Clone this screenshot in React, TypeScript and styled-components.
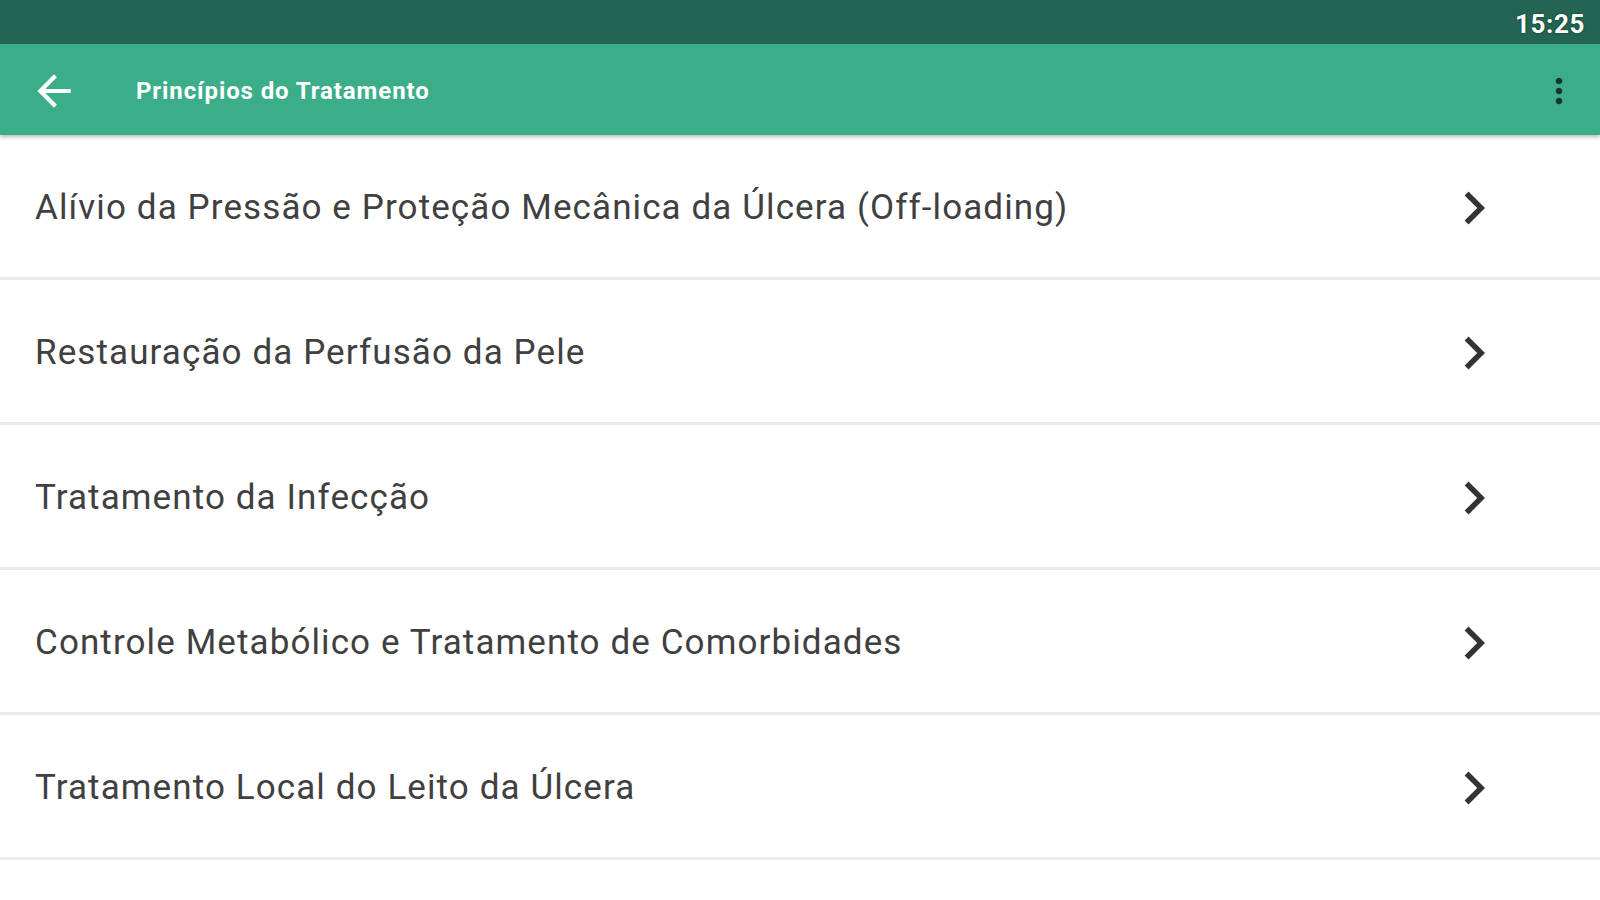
import React from "react";
import styled, { createGlobalStyle } from "styled-components";

const GlobalStyle = createGlobalStyle`
  html, body {
    margin: 0;
    padding: 0;
    background: #ffffff;
  }
  body {
    font-family: Roboto, "Noto Sans", "Liberation Sans", sans-serif;
  }
`;

const Screen = styled.div`
  width: 1600px;
  height: 900px;
  overflow: hidden;
  display: flex;
  flex-direction: column;
  background: #ffffff;
`;

const StatusBar = styled.div`
  height: 44px;
  flex-shrink: 0;
  background: #236552;
  display: flex;
  align-items: center;
  justify-content: flex-end;
  padding: 3px 15px 0 0;
  box-sizing: border-box;
`;

const Clock = styled.span`
  color: #ffffff;
  font-size: 26px;
  font-weight: 700;
  letter-spacing: 0.6px;
  text-shadow: 0 0 2px rgba(0, 0, 0, 0.6);
`;

const AppBar = styled.header`
  height: 91px;
  flex-shrink: 0;
  box-sizing: border-box;
  background: #3bae89;
  display: flex;
  align-items: center;
  padding: 3px 21px 0 29px;
  box-shadow: 0 2px 4px rgba(0, 0, 0, 0.28);
  position: relative;
  z-index: 1;
`;

const IconButton = styled.span`
  display: flex;
  align-items: center;
  justify-content: center;
`;

const Title = styled.h1`
  margin: 0 0 0 57px;
  flex: 1;
  color: #ffffff;
  font-size: 24px;
  font-weight: 700;
  letter-spacing: 0.9px;
`;

const List = styled.ul`
  list-style-type: none;
  margin: 0;
  padding: 0;
`;

const Row = styled.li`
  box-sizing: border-box;
  height: 145px;
  display: flex;
  align-items: center;
  justify-content: space-between;
  padding: 3px 93px 0 35px;
  border-bottom: 3px solid #ebebeb;
`;

const RowLabel = styled.span`
  font-size: 35px;
  color: #404040;
  letter-spacing: 1.1px;
`;

const items = [
  "Alívio da Pressão e Proteção Mecânica da Úlcera (Off-loading)",
  "Restauração da Perfusão da Pele",
  "Tratamento da Infecção",
  "Controle Metabólico e Tratamento de Comorbidades",
  "Tratamento Local do Leito da Úlcera",
];

function BackArrow() {
  return (
    <svg width="50" height="50" viewBox="0 0 24 24">
      <path
        fill="#ffffff"
        d="M20 11H7.83l5.59-5.59L12 4l-8 8 8 8 1.41-1.41L7.83 13H20v-2z"
      />
    </svg>
  );
}

function MoreVert() {
  return (
    <svg width="40" height="40" viewBox="0 0 24 24">
      <path
        fill="#17372d"
        d="M12 8c1.1 0 2-.9 2-2s-.9-2-2-2-2 .9-2 2 .9 2 2 2zm0 2c-1.1 0-2 .9-2 2s.9 2 2 2 2-.9 2-2-.9-2-2-2zm0 6c-1.1 0-2 .9-2 2s.9 2 2 2 2-.9 2-2-.9-2-2-2z"
      />
    </svg>
  );
}

function Chevron() {
  return (
    <svg width="66" height="66" viewBox="0 0 24 24">
      <path fill="#333333" d="M10 6L8.59 7.41 13.17 12l-4.58 4.59L10 18l6-6z" />
    </svg>
  );
}

export default function App() {
  return (
    <Screen>
      <GlobalStyle />
      <StatusBar>
        <Clock>15:25</Clock>
      </StatusBar>
      <AppBar>
        <IconButton>
          <BackArrow />
        </IconButton>
        <Title>Princípios do Tratamento</Title>
        <IconButton>
          <MoreVert />
        </IconButton>
      </AppBar>
      <List>
        {items.map((item) => (
          <Row key={item}>
            <RowLabel>{item}</RowLabel>
            <Chevron />
          </Row>
        ))}
      </List>
    </Screen>
  );
}
